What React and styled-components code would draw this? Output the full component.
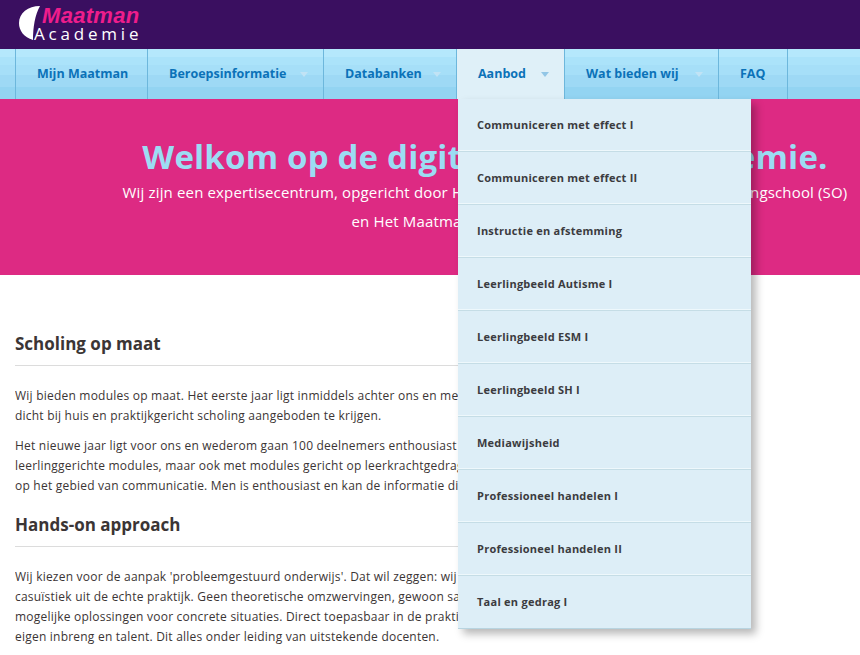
import styled, { createGlobalStyle } from "styled-components";

const GlobalStyle = createGlobalStyle`
  html, body {
    margin: 0;
    padding: 0;
    background: #fff;
    overflow: hidden;
  }
  body {
    font-family: "Open Sans", "Noto Sans", sans-serif;
    color: #3b3535;
  }
`;

const Page = styled.div`
  width: 860px;
  height: 655px;
  overflow: hidden;
  position: relative;
`;

const Header = styled.header`
  height: 49px;
  background: #3a0f60;
  padding: 6px 0 0 19px;
  box-sizing: border-box;
`;

const Logo = styled.div`
  display: flex;
  align-items: flex-start;
  height: 40px;
  svg {
    display: block;
    flex: none;
  }
`;

const LogoText = styled.div`
  margin-left: -8px;
  display: flex;
  flex-direction: column;
`;

const LogoTop = styled.span`
  font: italic bold 22px/20px "Liberation Sans", Arial, sans-serif;
  color: #ee1d8c;
  margin-left: 8px;
  letter-spacing: 0.3px;
`;

const LogoBottom = styled.span`
  font: 400 17px/15px "Open Sans", sans-serif;
  color: #fff;
  letter-spacing: 3.8px;
`;

const Nav = styled.nav`
  height: 50px;
  display: flex;
  padding-left: 15px;
  background: linear-gradient(
    #b5e8fc 0 8px,
    #abe3fa 8px 16px,
    #a6dff8 16px 26px,
    #9ed9f5 26px 38px,
    #93d4f2 38px
  );
`;

const NavItem = styled.a`
  display: flex;
  align-items: center;
  height: 100%;
  box-sizing: border-box;
  width: ${(p) => p.$w}px;
  border-left: 1px solid #6db7dc;
  border-right: ${(p) => (p.$last ? "1px solid #6db7dc" : "none")};
  padding: 0 0 2px 21px;
  font: bold 12.5px "Open Sans", sans-serif;
  color: #0b72b8;
  background: ${(p) => (p.$active ? "#dff0f8" : "transparent")};
  position: relative;
  white-space: nowrap;
`;

const Caret = styled.span`
  position: absolute;
  right: 15px;
  top: 23px;
  width: 0;
  height: 0;
  border-left: 4px solid transparent;
  border-right: 4px solid transparent;
  border-top: 5px solid ${(p) => (p.$active ? "#92c6e6" : "#c1e3f5")};
`;

const Dropdown = styled.ul`
  position: absolute;
  left: 458px;
  top: 99px;
  width: 293px;
  margin: 0;
  padding: 0;
  list-style: none;
  background: #ddeef7;
  box-shadow: 5px 5px 8px rgba(0, 0, 0, 0.28);
  z-index: 5;
`;

const DropItem = styled.li`
  height: 53px;
  box-sizing: border-box;
  padding: 0 0 2px 19px;
  display: flex;
  align-items: center;
  font: bold 11px "Open Sans", sans-serif;
  letter-spacing: 0.25px;
  color: #3b3b40;
  border-bottom: 1px solid #c5dde6;
  box-shadow: inset 0 -1px 0 #eef8fc;
  &:last-child {
    border-bottom: 1px solid #b8d4e0;
    box-shadow: none;
  }
`;

const Hero = styled.section`
  height: 176px;
  background: #dd2a83;
  text-align: center;
  padding: 37px 0 0 110px;
  box-sizing: border-box;
`;

const HeroTitle = styled.h1`
  margin: 0;
  font: bold 33px/42px "Open Sans", sans-serif;
  letter-spacing: 0.2px;
  color: #9cdcf3;
  white-space: nowrap;
`;

/* the part of the title that sits behind the open menu */
const TitleTight = styled.span`
  letter-spacing: -2.05px;
`;

const HeroText = styled.p`
  margin: 0;
  font: 400 15px/29px "Open Sans", sans-serif;
  letter-spacing: 0.15px;
  color: #fff;
  white-space: nowrap;
`;

const Content = styled.main`
  padding: 56px 15px 0;
  width: 720px;
`;

const Heading = styled.h2`
  margin: 0 0 20px;
  padding-bottom: 8px;
  border-bottom: 1px solid #dcdcdc;
  font: bold 17px/26px "Open Sans", sans-serif;
  color: #3b3535;
  p + & {
    margin-top: 16px;
  }
`;

const Para = styled.p`
  margin: 0 0 10px;
  font: 400 12px/20px "Open Sans", sans-serif;
  letter-spacing: 0.22px;
  color: #3b3535;
  white-space: nowrap;
  overflow: hidden;
`;

const navItems = [
  { label: "Mijn Maatman", w: 132 },
  { label: "Beroepsinformatie", w: 176, caret: true },
  { label: "Databanken", w: 133, caret: true },
  { label: "Aanbod", w: 108, caret: true, active: true },
  { label: "Wat bieden wij", w: 154, caret: true },
  { label: "FAQ", w: 70, last: true },
];

const menu = [
  "Communiceren met effect I",
  "Communiceren met effect II",
  "Instructie en afstemming",
  "Leerlingbeeld Autisme I",
  "Leerlingbeeld ESM I",
  "Leerlingbeeld SH I",
  "Mediawijsheid",
  "Professioneel handelen I",
  "Professioneel handelen II",
  "Taal en gedrag I",
];

export default function App() {
  return (
    <Page>
      <GlobalStyle />
      <Header>
        <Logo>
          <svg width="23" height="34" viewBox="0 0 23 34">
            <path d="M21 0C9 0 0 7 0 17c0 8 5 14 14 17C14 21 16 9 21 0z" fill="#fff" />
          </svg>
          <LogoText>
            <LogoTop>Maatman</LogoTop>
            <LogoBottom>Academie</LogoBottom>
          </LogoText>
        </Logo>
      </Header>
      <Nav>
        {navItems.map((item) => (
          <NavItem key={item.label} $w={item.w} $active={item.active} $last={item.last}>
            {item.label}
            {item.caret && <Caret $active={item.active} />}
          </NavItem>
        ))}
      </Nav>
      <Dropdown>
        {menu.map((label) => (
          <DropItem key={label}>{label}</DropItem>
        ))}
      </Dropdown>
      <Hero>
        <HeroTitle>
          Welkom op de digit<TitleTight>ale Maatman Acad</TitleTight>emie.
        </HeroTitle>
        <HeroText>Wij zijn een expertisecentrum, opgericht door Het Speciaal Basisonderwijs, en een Leerlingschool (SO)</HeroText>
        <HeroText>en Het Maatman onderwijs Academie</HeroText>
      </Hero>
      <Content>
        <Heading>Scholing op maat</Heading>
        <Para>
          Wij bieden modules op maat. Het eerste jaar ligt inmiddels achter ons en met
          <br />
          dicht bij huis en praktijkgericht scholing aangeboden te krijgen.
        </Para>
        <Para>
          Het nieuwe jaar ligt voor ons en wederom gaan 100 deelnemers enthousiast
          <br />
          leerlinggerichte modules, maar ook met modules gericht op leerkrachtgedrag
          <br />
          op het gebied van communicatie. Men is enthousiast en kan de informatie direct
        </Para>
        <Heading>Hands-on approach</Heading>
        <Para>
          Wij kiezen voor de aanpak 'probleemgestuurd onderwijs'. Dat wil zeggen: wij
          <br />
          casuïstiek uit de echte praktijk. Geen theoretische omzwervingen, gewoon samen
          <br />
          mogelijke oplossingen voor concrete situaties. Direct toepasbaar in de praktijk
          <br />
          eigen inbreng en talent. Dit alles onder leiding van uitstekende docenten.
        </Para>
      </Content>
    </Page>
  );
}
